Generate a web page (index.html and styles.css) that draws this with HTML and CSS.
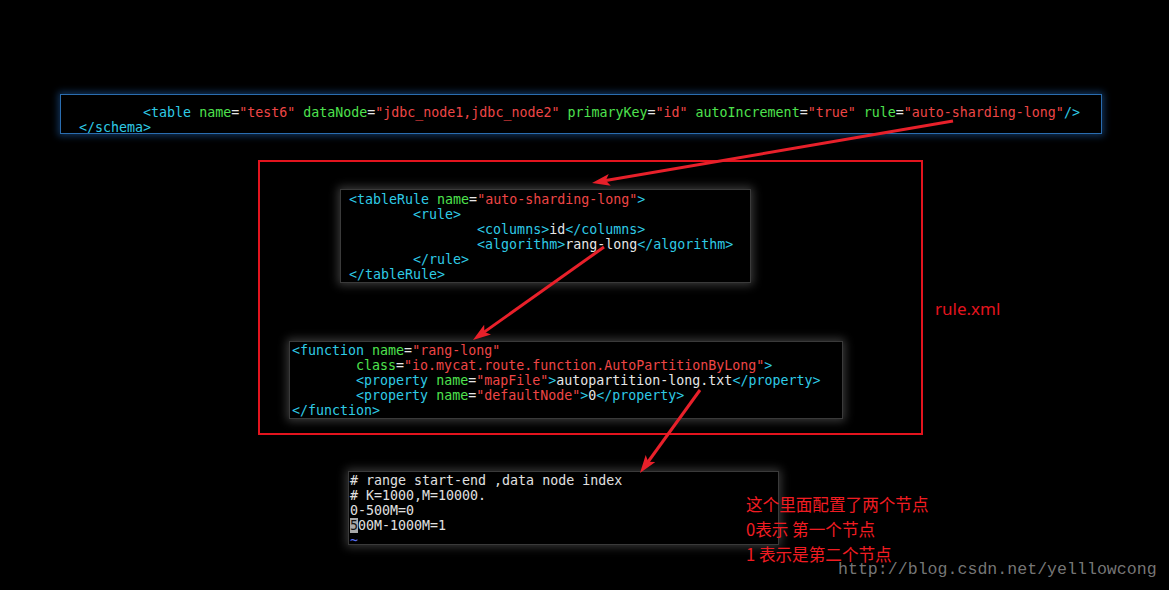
FILE: index.html
```html
<!DOCTYPE html>
<html lang="zh-CN">
<head>
    <meta charset="UTF-8">
    <meta name="viewport" content="width=device-width, initial-scale=1.0">
    <title>rule.xml</title>
    <link rel="stylesheet" href="styles.css">
</head>
<body>
    <div class="canvas">
        <pre class="term term-schema">          <span class="t">&lt;table</span> <span class="a">name</span>=<span class="v">"test6"</span> <span class="a">dataNode</span>=<span class="v">"jdbc_node1,jdbc_node2"</span> <span class="a">primaryKey</span>=<span class="v">"id"</span> <span class="a">autoIncrement</span>=<span class="v">"true"</span> <span class="a">rule</span>=<span class="v">"auto-sharding-long"</span><span class="t">/&gt;</span>
  <span class="t">&lt;/schema&gt;</span></pre>

        <div class="rule-frame"></div>

        <pre class="term term-rule"><span class="t">&lt;tableRule</span> <span class="a">name</span>=<span class="v">"auto-sharding-long"</span><span class="t">&gt;</span>
        <span class="t">&lt;rule&gt;</span>
                <span class="t">&lt;columns&gt;</span>id<span class="t">&lt;/columns&gt;</span>
                <span class="t">&lt;algorithm&gt;</span>rang-long<span class="t">&lt;/algorithm&gt;</span>
        <span class="t">&lt;/rule&gt;</span>
<span class="t">&lt;/tableRule&gt;</span></pre>

        <pre class="term term-func"><span class="t">&lt;function</span> <span class="a">name</span>=<span class="v">"rang-long"</span>
        <span class="a">class</span>=<span class="v">"io.mycat.route.function.AutoPartitionByLong"</span><span class="t">&gt;</span>
        <span class="t">&lt;property</span> <span class="a">name</span>=<span class="v">"mapFile"</span><span class="t">&gt;</span>autopartition-long.txt<span class="t">&lt;/property&gt;</span>
        <span class="t">&lt;property</span> <span class="a">name</span>=<span class="v">"defaultNode"</span><span class="t">&gt;</span>0<span class="t">&lt;/property&gt;</span>
<span class="t">&lt;/function&gt;</span></pre>

        <pre class="term term-range"># range start-end ,data node index
# K=1000,M=10000.
0-500M=0
<span class="cursor">5</span>00M-1000M=1
<span class="tilde">~</span></pre>

        <div class="file-label">rule.xml</div>

        <div class="note">
            <p>这个里面配置了两个节点</p>
            <p>0表示 第一个节点</p>
            <p>1 表示是第二个节点</p>
        </div>

        <div class="watermark">http://blog.csdn.net/yelllowcong</div>

        <svg class="arrows" width="1169" height="590" viewBox="0 0 1169 590">
            <defs>
                <marker id="head" markerUnits="userSpaceOnUse" markerWidth="20" markerHeight="14" refX="10" refY="6" orient="auto">
                    <path d="M0,0 L18,6 L0,12 L4,6 Z" fill="#e8202a"/>
                </marker>
            </defs>
            <line x1="953" y1="121" x2="599.9" y2="181.6" marker-end="url(#head)"/>
            <line x1="604" y1="247" x2="479.5" y2="335.4" marker-end="url(#head)"/>
            <line x1="700" y1="390" x2="644.7" y2="466.5" marker-end="url(#head)"/>
        </svg>
    </div>
</body>
</html>
```

FILE: styles.css
```css
* {
    box-sizing: border-box;
    margin: 0;
    padding: 0;
}

body {
    background-color: #000;
    overflow: hidden;
}

.canvas {
    position: relative;
    width: 1169px;
    height: 590px;
    background-color: #000;
}

/* terminal snippets */
.term {
    position: absolute;
    overflow: hidden;
    background-color: #000;
    color: #e6e6e6;
    font-family: "DejaVu Sans Mono", "Liberation Mono", monospace;
    font-size: 13.3px;
    line-height: 15px;
    white-space: pre;
    tab-size: 8;
}

.t { color: #2fcbe6; }
.a { color: #4ee24e; }
.v { color: #ee4646; }

.term-schema {
    left: 60px;
    top: 94px;
    width: 1042px;
    height: 40px;
    padding: 10px 0 0 2px;
    border: 1px solid #2a6db0;
    box-shadow: 0 0 7px 2px rgba(28, 85, 150, 0.6);
}

.term-rule {
    left: 340px;
    top: 189px;
    width: 411px;
    height: 94px;
    padding: 2px 0 0 8px;
    border: 1px solid #3a3a3a;
    box-shadow: 0 0 9px 2px rgba(110, 110, 110, 0.55);
}

.term-func {
    left: 289px;
    top: 341px;
    width: 554px;
    height: 78px;
    padding: 1px 0 0 2px;
    border: 1px solid #3a3a3a;
    box-shadow: 0 0 9px 2px rgba(110, 110, 110, 0.55);
}

.term-range {
    left: 348px;
    top: 471px;
    width: 431px;
    height: 74px;
    padding: 1px 0 0 1px;
    color: #e0e0e0;
    border: 1px solid #3a3a3a;
    box-shadow: 0 0 9px 2px rgba(110, 110, 110, 0.5);
}

.cursor {
    background-color: #a8a8a8;
    color: #111;
}

.tilde {
    color: #5b6ff0;
}

.rule-frame {
    position: absolute;
    left: 258px;
    top: 160px;
    width: 665px;
    height: 275px;
    border: 2px solid #e3141e;
}

.file-label {
    position: absolute;
    left: 935px;
    top: 297px;
    font-family: "Noto Sans", "Liberation Sans", sans-serif;
    font-size: 17px;
    line-height: 24px;
    color: #e3141e;
}

.note {
    position: absolute;
    left: 746px;
    top: 492px;
    font-family: "Noto Sans CJK SC", "Noto Sans", sans-serif;
    font-size: 16.6px;
    line-height: 25px;
    color: #f01c22;
}

.watermark {
    position: absolute;
    left: 838px;
    top: 560px;
    font-family: "Liberation Mono", monospace;
    font-size: 16.6px;
    line-height: 20px;
    color: rgba(150, 150, 150, 0.8);
}

.arrows {
    position: absolute;
    left: 0;
    top: 0;
    pointer-events: none;
}

.arrows line {
    stroke: #e8202a;
    stroke-width: 3;
}
```
